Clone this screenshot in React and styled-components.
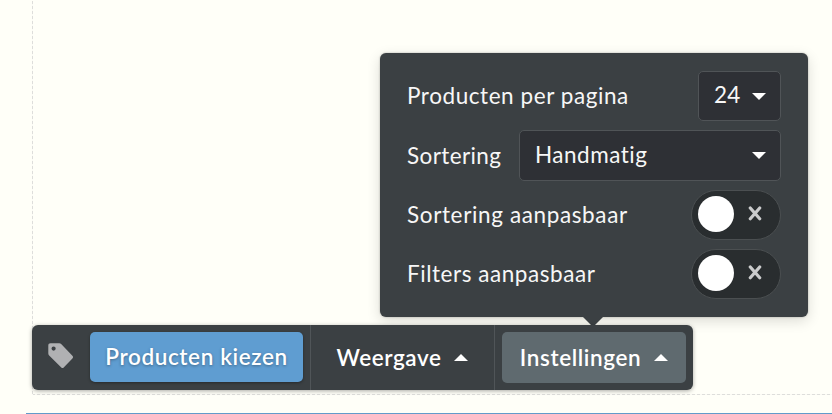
import React, { useState } from 'react';
import styled, { createGlobalStyle } from 'styled-components';

const GlobalStyle = createGlobalStyle`
    * {
        box-sizing: border-box;
    }
    body {
        margin: 0;
        overflow: hidden;
        background: #fffff8;
        font-family: Lato, 'Open Sans', sans-serif;
        color: #ffffff;
    }
    button {
        font-family: inherit;
        color: inherit;
        border: 0;
        padding: 0;
        background: none;
    }
`

const Page = styled.main`
    width: 832px;
    height: 414px;
    display: flex;
    flex-direction: column;
    justify-content: space-between;
`

/* dashed outline of the selected block, left and bottom side */
const Block = styled.section`
    height: 395px;
    margin-left: 32px;
    padding-top: 53px;
    display: flex;
    flex-direction: column;
    align-items: flex-start;
    gap: 8px;
    background:
        repeating-linear-gradient(180deg, #dededb 0 3px, #fafaf4 3px 5px) 0 1px / 1px 100% no-repeat,
        repeating-linear-gradient(90deg, #dededb 0 3px, #fafaf4 3px 5px) 0 100% / 100% 1px no-repeat;
`

const NextBlock = styled.div`
    height: 1px;
    margin-left: 26px;
    background: #629bca;
`

const Panel = styled.div`
    position: relative;
    width: 428px;
    height: 264px;
    margin-left: 348px;
    padding: 18px 27px;
    display: flex;
    flex-direction: column;
    justify-content: space-between;
    background: #3b4043;
    border-radius: 6px;
    box-shadow: 0 0 2px rgba(0, 0, 0, 0.3), 0 4px 14px rgba(0, 0, 0, 0.14);

    &::after {
        content: '';
        position: absolute;
        top: 100%;
        left: 203px;
        border: 10px solid transparent;
        border-top-color: #3b4043;
        border-bottom: 0;
    }
`

const Row = styled.div`
    height: ${props => props.$tall ? 51 : 50}px;
    display: flex;
    align-items: center;
    justify-content: space-between;
`

const Label = styled.span`
    font-size: 22.5px;
    line-height: 28px;
    letter-spacing: ${props => props.$spacing || 0}px;
    white-space: nowrap;
    color: #f7f7f7;
`

const SelectBox = styled.button`
    width: ${props => props.$width}px;
    height: 100%;
    padding: 0 14px 0 15px;
    display: flex;
    align-items: center;
    justify-content: space-between;
    background: #2e3035;
    border: 1px solid #505457;
    border-radius: 5px;

    ${Label} {
        padding-bottom: 2px;
    }
`

const Switch = styled.button`
    width: 90px;
    height: 50px;
    padding: 0 18px 3px 6px;
    display: flex;
    align-items: center;
    justify-content: space-between;
    background: #292d2f;
    border: 1px solid #4b4f51;
    border-radius: 25px;
`

const Knob = styled.span`
    width: 36px;
    height: 36px;
    border-radius: 50%;
    background: #ffffff;
`

const Toolbar = styled.nav`
    position: relative;
    width: 661px;
    height: 65px;
    display: flex;
    background: #3b4043;
    border-radius: 6px;
    box-shadow: 0 1px 4px rgba(0, 0, 0, 0.35);
`

const Group = styled.div`
    width: ${props => props.$width}px;
    padding: 7px;
    display: flex;
    border-left: ${props => props.$first ? '0' : '1px solid #505558'};
`

const IconCell = styled.span`
    width: 51px;
    padding: 11px 0 0 9px;
`

const BarButton = styled.button`
    flex: 1;
    height: ${props => props.$primary ? 50 : 51}px;
    padding-bottom: ${props => props.$primary ? 2 : 0}px;
    display: flex;
    align-items: center;
    justify-content: center;
    gap: 13px;
    font-size: 22.5px;
    font-weight: 600;
    letter-spacing: ${props => props.$spacing || 0}px;
    white-space: nowrap;
    border-radius: 5px;
    background: ${props => props.$primary ? '#5f9dd1' : props.$active ? '#5f6a6f' : 'transparent'};
    box-shadow: ${props => props.$primary ? '0 1px 3px rgba(0, 0, 0, 0.35)' : 'none'};
    text-shadow: ${props => props.$primary ? '0 1px 3px rgba(0, 0, 0, 0.35)' : 'none'};
`

const Caret = ({ up }) => (
    <svg width="14" height="7" viewBox="0 0 14 7">
        <path d={up ? 'M0 7 7 0l7 7z' : 'M0 0h14L7 7z'} fill="#fff" />
    </svg>
);

const Cross = () => (
    <svg width="14" height="15" viewBox="0 0 14 15">
        <path d="M2.3 2l9.4 10.8M11.7 2 2.3 12.8" stroke="#cacbcc" strokeWidth="3.2" strokeLinecap="round" />
    </svg>
);

const Tag = () => (
    <svg width="26" height="26" viewBox="0 0 26 26">
        <path
            fill="#b0b1b3"
            fillRule="evenodd"
            d="M2.5.3h8.7c.9 0 1.6.3 2.2.9l11 11.6c.9.9.9 1.8 0 2.7l-8.7 9c-.8.8-1.6.8-2.4 0L1.4 12.8C.7 12.1.3 11.3.3 10.4V2.5C.3 1.1 1.1.3 2.5.3zM5.6 3.5a2.1 2.1 0 1 0 0 4.2 2.1 2.1 0 0 0 0-4.2z"
        />
    </svg>
);

const Select = ({ value, width, spacing }) => (
    <SelectBox $width={width}>
        <Label $spacing={spacing}>{value}</Label>
        <Caret />
    </SelectBox>
);

const Toggle = () => {
    const [on, setOn] = useState(false);

    return (
        <Switch role="switch" aria-checked={on} onClick={() => setOn(!on)}>
            {on && <Cross />}
            <Knob />
            {!on && <Cross />}
        </Switch>
    );
}

export default function App () {

    return (
        <Page>
            <GlobalStyle />
            <Block>
                <Panel>
                    <Row>
                        <Label $spacing={0.57}>Producten per pagina</Label>
                        <Select value="24" width={83} spacing={0.3} />
                    </Row>
                    <Row $tall>
                        <Label $spacing={0.4}>Sortering</Label>
                        <Select value="Handmatig" width={262} spacing={0.5} />
                    </Row>
                    <Row>
                        <Label $spacing={0.63}>Sortering aanpasbaar</Label>
                        <Toggle />
                    </Row>
                    <Row>
                        <Label $spacing={0.55}>Filters aanpasbaar</Label>
                        <Toggle />
                    </Row>
                </Panel>
                <Toolbar>
                    <Group $first $width={278}>
                        <IconCell><Tag /></IconCell>
                        <BarButton $primary $spacing={0.62}>Producten kiezen</BarButton>
                    </Group>
                    <Group $width={184}>
                        <BarButton $spacing={0.55}>Weergave <Caret up /></BarButton>
                    </Group>
                    <Group $width={199}>
                        <BarButton $active $spacing={0.6}>Instellingen <Caret up /></BarButton>
                    </Group>
                </Toolbar>
            </Block>
            <NextBlock />
        </Page>
    );
}
